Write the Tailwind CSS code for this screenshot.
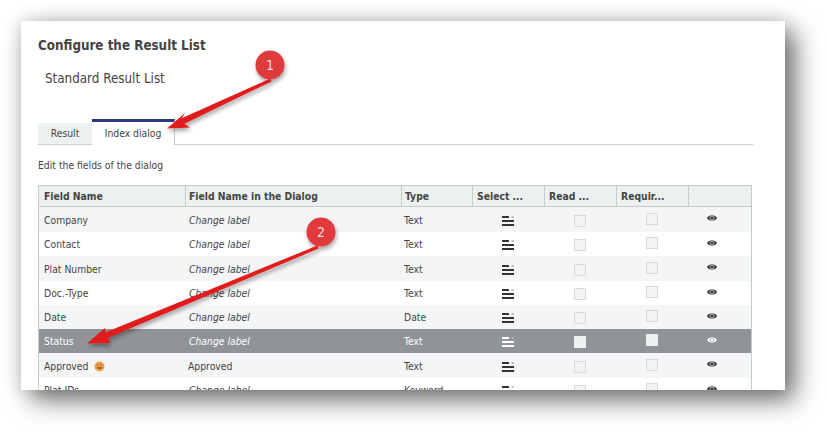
<!DOCTYPE html>
<html lang="en">
<head>
  <meta charset="UTF-8">
  <title>Configure the Result List</title>
  <script src="https://cdn.jsdelivr.net/npm/@tailwindcss/browser@4"></script>
</head>
<body class="bg-white">
  <div class="relative w-[827px] h-[432px] overflow-hidden bg-white pt-[21px] pl-[21px] font-['DejaVu_Sans_Condensed','DejaVu_Sans',sans-serif] text-[#444]">
    <svg width="0" height="0" class="absolute">
      <defs>
        <g id="lines">
          <rect x="0" y="0" width="7" height="2" fill="currentColor"/>
          <path d="M9 0.500h3l-1.500 1.500z" fill="currentColor" opacity=".6"/>
          <rect x="0" y="4" width="12" height="2" fill="currentColor"/>
          <rect x="0" y="8" width="12" height="2" fill="currentColor"/>
        </g>
        <g id="eye">
          <path d="M0 4c2-3.600 8-3.600 10 0c-2 3.600-8 3.600-10 0z" fill="currentColor"/>
          <circle cx="5" cy="4" r="2" fill="none" stroke="#fff" stroke-width=".7"/>
        </g>
      </defs>
    </svg>

    <!-- card -->
    <div class="w-[764px] h-[369px] overflow-hidden bg-white pl-[17px] pt-[16px] shadow-[10px_10px_24px_rgba(0,0,0,0.55),0_0_18px_rgba(0,0,0,0.15)]">
      <h1 class="text-[13.3px] leading-[18px] font-bold">Configure the Result List</h1>
      <p class="pl-[7px] mt-[14px] text-[13.3px] leading-[20px]">Standard Result List</p>

      <div class="flex items-end w-[715px] h-[26px] mt-[30px] border-b border-[#c9cccc] text-[10.3px]">
        <div class="w-[54px] h-[22px] -mb-px flex items-center justify-center bg-[#eef1f2] border-b border-[#c9cccc]">Result</div>
        <div class="w-[83px] h-[26px] -mb-px pt-[1px] flex items-center justify-center bg-white border-t-[3px] border-t-[#2e3a80] border-r border-r-[#c9cccc]">Index dialog</div>
      </div>

      <p class="mt-[13px] text-[10.3px] leading-[14px]">Edit the fields of the dialog</p>

      <div class="mt-[13px] w-[714px] border-x border-t border-[#c5cbcc] text-[10.3px]">
        <div class="flex h-[21px] items-center bg-[#ecf0f1] border-b border-[#c5cbcc] font-bold">
          <div class="w-[146px] pl-[5px] pt-px">Field Name</div>
          <div class="w-[216px] h-full flex items-center pl-[3px] pt-px border-l border-[#c5cbcc]">Field Name in the Dialog</div>
          <div class="w-[71px] h-full flex items-center pl-[3px] pt-px border-l border-[#c5cbcc]">Type</div>
          <div class="w-[72px] h-full flex items-center pl-[4px] pt-px border-l border-[#c5cbcc]">Select ...</div>
          <div class="w-[72px] h-full flex items-center pl-[4px] pt-px border-l border-[#c5cbcc]">Read ...</div>
          <div class="w-[72px] h-full flex items-center pl-[4px] pt-px border-l border-[#c5cbcc]">Requir...</div>
          <div class="w-[63px] h-full border-l border-[#c5cbcc]"></div>
        </div>

        <div class="flex h-[25px] pt-[2px] items-center bg-[#f3f5f6]">
          <div class="w-[146px] pl-[5px]">Company</div><div class="w-[216px] pl-[4px] italic">Change label</div><div class="w-[71px] pl-[3px]">Text</div>
          <div class="w-[72px] pl-[30px] flex text-[#333]"><svg width="12" height="10"><use href="#lines"/></svg></div>
          <div class="w-[72px] pl-[30px]"><div class="size-[12px] border border-[#d6d9d9] bg-[#f2f4f4]"></div></div>
          <div class="w-[72px] pl-[30px] -mt-[4px]"><div class="size-[12px] border border-[#d6d9d9] bg-[#f2f4f4]"></div></div>
          <div class="w-[63px] pl-[19px] -mt-[5px] flex text-[#333]"><svg width="10" height="8"><use href="#eye"/></svg></div>
        </div>
        <div class="flex h-[24px] pt-[2px] items-center bg-white">
          <div class="w-[146px] pl-[5px]">Contact</div><div class="w-[216px] pl-[4px] italic">Change label</div><div class="w-[71px] pl-[3px]">Text</div>
          <div class="w-[72px] pl-[30px] flex text-[#333]"><svg width="12" height="10"><use href="#lines"/></svg></div>
          <div class="w-[72px] pl-[30px]"><div class="size-[12px] border border-[#d6d9d9] bg-[#f2f4f4]"></div></div>
          <div class="w-[72px] pl-[30px] -mt-[4px]"><div class="size-[12px] border border-[#d6d9d9] bg-[#f2f4f4]"></div></div>
          <div class="w-[63px] pl-[19px] -mt-[5px] flex text-[#333]"><svg width="10" height="8"><use href="#eye"/></svg></div>
        </div>
        <div class="flex h-[25px] pt-[2px] items-center bg-[#f3f5f6]">
          <div class="w-[146px] pl-[5px]">Plat Number</div><div class="w-[216px] pl-[4px] italic">Change label</div><div class="w-[71px] pl-[3px]">Text</div>
          <div class="w-[72px] pl-[30px] flex text-[#333]"><svg width="12" height="10"><use href="#lines"/></svg></div>
          <div class="w-[72px] pl-[30px]"><div class="size-[12px] border border-[#d6d9d9] bg-[#f2f4f4]"></div></div>
          <div class="w-[72px] pl-[30px] -mt-[4px]"><div class="size-[12px] border border-[#d6d9d9] bg-[#f2f4f4]"></div></div>
          <div class="w-[63px] pl-[19px] -mt-[5px] flex text-[#333]"><svg width="10" height="8"><use href="#eye"/></svg></div>
        </div>
        <div class="flex h-[24px] pt-[2px] items-center bg-white">
          <div class="w-[146px] pl-[5px]">Doc.-Type</div><div class="w-[216px] pl-[4px] italic">Change label</div><div class="w-[71px] pl-[3px]">Text</div>
          <div class="w-[72px] pl-[30px] flex text-[#333]"><svg width="12" height="10"><use href="#lines"/></svg></div>
          <div class="w-[72px] pl-[30px]"><div class="size-[12px] border border-[#d6d9d9] bg-[#f2f4f4]"></div></div>
          <div class="w-[72px] pl-[30px] -mt-[4px]"><div class="size-[12px] border border-[#d6d9d9] bg-[#f2f4f4]"></div></div>
          <div class="w-[63px] pl-[19px] -mt-[5px] flex text-[#333]"><svg width="10" height="8"><use href="#eye"/></svg></div>
        </div>
        <div class="flex h-[24px] pt-[2px] items-center bg-[#f3f5f6]">
          <div class="w-[146px] pl-[5px]">Date</div><div class="w-[216px] pl-[4px] italic">Change label</div><div class="w-[71px] pl-[3px]">Date</div>
          <div class="w-[72px] pl-[30px] flex text-[#333]"><svg width="12" height="10"><use href="#lines"/></svg></div>
          <div class="w-[72px] pl-[30px]"><div class="size-[12px] border border-[#d6d9d9] bg-[#f2f4f4]"></div></div>
          <div class="w-[72px] pl-[30px] -mt-[4px]"><div class="size-[12px] border border-[#d6d9d9] bg-[#f2f4f4]"></div></div>
          <div class="w-[63px] pl-[19px] -mt-[5px] flex text-[#333]"><svg width="10" height="8"><use href="#eye"/></svg></div>
        </div>
        <div class="flex h-[24px] pt-[2px] items-center bg-[#909498] text-white">
          <div class="w-[146px] pl-[5px]">Status</div><div class="w-[216px] pl-[4px] italic">Change label</div><div class="w-[71px] pl-[3px]">Text</div>
          <div class="w-[72px] pl-[30px] flex"><svg width="12" height="10"><use href="#lines"/></svg></div>
          <div class="w-[72px] pl-[30px]"><div class="size-[12px] bg-[#eef1f2]"></div></div>
          <div class="w-[72px] pl-[30px] -mt-[4px]"><div class="size-[12px] bg-[#eef1f2]"></div></div>
          <div class="w-[63px] pl-[19px] -mt-[5px] flex text-white"><svg width="10" height="8"><use href="#eye"/><circle cx="5" cy="4" r="1.800" fill="none" stroke="#909498" stroke-width=".7"/></svg></div>
        </div>
        <div class="flex h-[25px] pt-[2px] items-center bg-[#f3f5f6]">
          <div class="w-[146px] pl-[5px] flex items-center gap-[6px]">Approved
            <svg width="11" height="11" viewBox="0 0 11 11"><circle cx="5.500" cy="5.500" r="5" fill="#eba04a"/><path d="M2.500 6.200c1 2.400 5 2.400 6 0z" fill="#8a5a22"/><path d="M3 4h1.600M6.400 4h1.600" stroke="#8a5a22"/></svg>
          </div>
          <div class="w-[216px] pl-[3px]">Approved</div><div class="w-[71px] pl-[3px]">Text</div>
          <div class="w-[72px] pl-[30px] flex text-[#333]"><svg width="12" height="10"><use href="#lines"/></svg></div>
          <div class="w-[72px] pl-[30px]"><div class="size-[12px] border border-[#d6d9d9] bg-[#f2f4f4]"></div></div>
          <div class="w-[72px] pl-[30px] -mt-[4px]"><div class="size-[12px] border border-[#d6d9d9] bg-[#f2f4f4]"></div></div>
          <div class="w-[63px] pl-[19px] -mt-[5px] flex text-[#333]"><svg width="10" height="8"><use href="#eye"/></svg></div>
        </div>
        <div class="flex h-[24px] pt-[2px] items-center bg-white">
          <div class="w-[146px] pl-[5px]">Plat IDs</div><div class="w-[216px] pl-[4px] italic">Change label</div><div class="w-[71px] pl-[3px]">Keyword</div>
          <div class="w-[72px] pl-[30px] flex text-[#333]"><svg width="12" height="10"><use href="#lines"/></svg></div>
          <div class="w-[72px] pl-[30px]"><div class="size-[12px] border border-[#d6d9d9] bg-[#f2f4f4]"></div></div>
          <div class="w-[72px] pl-[30px] -mt-[4px]"><div class="size-[12px] border border-[#d6d9d9] bg-[#f2f4f4]"></div></div>
          <div class="w-[63px] pl-[19px] -mt-[5px] flex text-[#333]"><svg width="10" height="8"><use href="#eye"/></svg></div>
        </div>
      </div>
    </div>

    <!-- callouts over the screenshot -->
    <svg class="absolute left-0 top-0" width="827" height="432" viewBox="0 0 827 432">
      <defs>
        <filter id="soft" x="-20%" y="-20%" width="140%" height="140%">
          <feDropShadow dx="1" dy="3" stdDeviation="2" flood-color="#000" flood-opacity=".35"/>
        </filter>
      </defs>
      <g filter="url(#soft)" fill="#e01b1b">
        <path d="M270.400 78.600L271.600 81.400L184.300 123.700L190 127.500L167 128.500L185 113L181.700 118.300z"/>
        <circle cx="270" cy="65" r="14.500" fill="#df3a3d"/>
        <path d="M317.400 245.600L318.600 248.400L108.200 337.800L110 343L87 343.500L105 328L105.800 332.200z"/>
        <circle cx="321" cy="232" r="14.500" fill="#df3a3d"/>
      </g>
      <text x="270" y="70" text-anchor="middle" font-family="DejaVu Sans Condensed, DejaVu Sans, sans-serif" font-size="14" fill="#f6dada">1</text>
      <text x="321" y="237" text-anchor="middle" font-family="DejaVu Sans Condensed, DejaVu Sans, sans-serif" font-size="14" fill="#f6dada">2</text>
    </svg>
  </div>
</body>
</html>
